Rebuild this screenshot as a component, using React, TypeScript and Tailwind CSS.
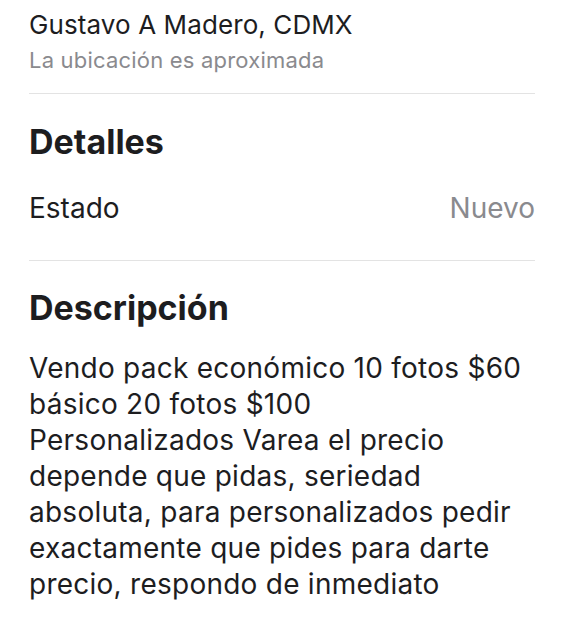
export default function App() {
  return (
    <div className="min-h-[620px] w-[564px] bg-white font-['Inter','Liberation_Sans',sans-serif] text-[#1d1d1f]">
      <div className="px-[29px] pt-[9px]">
        <div className="pb-[19px]">
          <p className="text-[26px] leading-[32px] tracking-[0.1px]">Gustavo A Madero, CDMX</p>
          <p className="mt-[5px] text-[22px] leading-[28px] tracking-[0.2px] text-[#8a8a8e]">La ubicación es aproximada</p>
        </div>
        <div className="border-t border-[#e3e3e3] pt-[28px] pb-[35px]">
          <h2 className="text-[34px] font-bold leading-[40px]">Detalles</h2>
          <div className="mt-[29px] flex items-center justify-between text-[28px] leading-[34px]">
            <span>Estado</span>
            <span className="text-[#8a8a8e]">Nuevo</span>
          </div>
        </div>
        <div className="border-t border-[#e3e3e3] pt-[27px]">
          <h2 className="text-[34px] font-bold leading-[40px]">Descripción</h2>
          <p className="mt-[22px] text-[28px] leading-[36px] tracking-[0.25px]">
            Vendo pack económico 10 fotos $60
            <br />
            básico 20 fotos $100
            <br />
            Personalizados Varea el precio
            <br />
            depende que pidas, seriedad
            <br />
            absoluta, para personalizados pedir
            <br />
            exactamente que pides para darte
            <br />
            precio, respondo de inmediato
          </p>
        </div>
      </div>
    </div>
  );
}
